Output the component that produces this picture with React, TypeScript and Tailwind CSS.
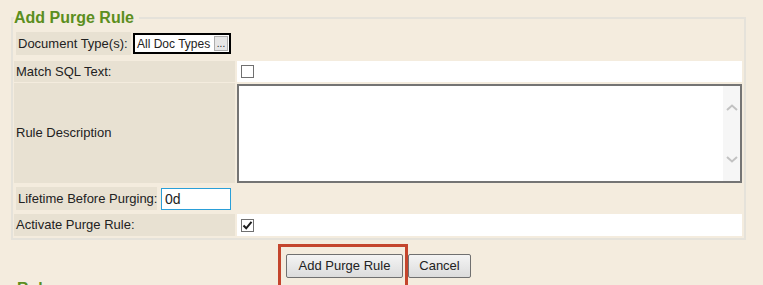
const labelCell = "flex items-center whitespace-nowrap bg-[#e8e1d2] pl-[2px] text-[13px] text-[#222]";

function Checkbox({ checked }: { checked?: boolean }) {
  return (
    <span className="flex h-[13px] w-[13px] items-center justify-center border border-[#707070] bg-white">
      {checked && (
        <svg width="11" height="11" viewBox="0 0 11 11">
          <path d="M1.5 5.5 L4.2 8.3 L9.5 1.8" fill="none" stroke="#1c1c1c" strokeWidth="2" />
        </svg>
      )}
    </span>
  );
}

function Chevron({ up }: { up?: boolean }) {
  return (
    <svg width="12" height="7" viewBox="0 0 12 7">
      <path
        d={up ? "M1 6 L6 1.5 L11 6" : "M1 1 L6 5.5 L11 1"}
        fill="none"
        stroke="#c2c2c2"
        strokeWidth="2"
      />
    </svg>
  );
}

export default function App() {
  return (
    <div className="relative h-[285px] w-[763px] overflow-hidden bg-[#f4ecde] font-['Liberation_Sans',Arial,sans-serif] text-[13px] text-[#222]">
      <fieldset className="ml-[11px] mt-[9px] w-[735px] border-2 border-[#e5e2da] pb-[2px] pl-[1px] pr-[2px]">
        <legend className="pr-[5px] text-[16px] font-bold leading-[18px] text-[#5b8e20]">Add Purge Rule</legend>

        <div className="mt-[5px] flex h-[23px] gap-[2px] pl-[2px]">
          <div className="flex w-[115px] items-center whitespace-nowrap bg-[#e8e1d2] pl-[2px]">Document Type(s):</div>
          <div className="mt-[1px] flex h-[21px] w-[98px] items-center justify-between whitespace-nowrap border-2 border-black bg-white pl-[2px] pr-[1px] text-[12px]">
            <span>All Doc Types</span>
            <span className="flex h-[15px] w-[14px] items-center justify-center border border-[#adadad] bg-[#e6e6e6] text-[10px] leading-none">
              ...
            </span>
          </div>
        </div>

        <div className="mt-[6px] grid h-[21px] grid-cols-[221px_1fr] gap-x-[2px]">
          <div className={labelCell}>Match SQL Text:</div>
          <div className="flex items-center bg-white pl-[4px]">
            <Checkbox />
          </div>
        </div>

        <div className="mt-[1px] grid h-[100px] grid-cols-[221px_1fr] gap-x-[2px]">
          <div className={labelCell}>Rule Description</div>
          <div className="mt-[1px] flex border-2 border-[#747474] bg-white">
            <div className="flex-1" />
            <div className="flex w-[17px] flex-col items-center justify-between bg-[#f6f6f6] py-[18px]">
              <Chevron up />
              <Chevron />
            </div>
          </div>
        </div>

        <div className="mt-[4px] flex h-[23px] gap-[4px] pl-[2px]">
          <div className="flex w-[141px] items-center whitespace-nowrap bg-[#e8e1d2] pl-[2px]">Lifetime Before Purging:</div>
          <div className="mt-[1px] flex h-[22px] w-[70px] items-center border border-[#2a9fd8] bg-white pl-[3px] text-[14px]">
            0d
          </div>
        </div>

        <div className="mt-[4px] grid h-[22px] grid-cols-[221px_1fr] gap-x-[2px]">
          <div className={labelCell}>Activate Purge Rule:</div>
          <div className="flex items-center bg-white pl-[4px]">
            <Checkbox checked />
          </div>
        </div>
      </fieldset>

      <div className="ml-[11px] mt-[14px] flex w-[735px] justify-center gap-[5px]">
        <button className="h-[24px] w-[117px] rounded-[2px] border border-[#707070] bg-gradient-to-b from-[#f4f4f4] to-[#dcdcdc] text-[13px] text-[#222]">
          Add Purge Rule
        </button>
        <button className="h-[24px] w-[63px] rounded-[2px] border border-[#707070] bg-gradient-to-b from-[#f4f4f4] to-[#dcdcdc] text-[13px] text-[#222]">
          Cancel
        </button>
      </div>

      <h2 className="mt-[2px] pl-[17px] text-[16px] font-bold leading-[18px] text-[#5b8e20]">Rules</h2>

      <div className="pointer-events-none absolute left-[278px] top-[244px] h-[44px] w-[130px] border-[3px] border-[#c4452c]" />
    </div>
  );
}
